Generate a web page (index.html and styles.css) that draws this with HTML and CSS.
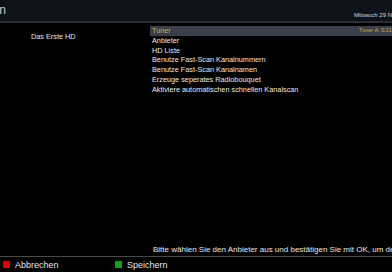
FILE: index.html
```html
<!DOCTYPE html>
<html lang="de">
<head>
  <meta charset="UTF-8">
  <title>Fast Scan</title>
  <link rel="stylesheet" href="styles.css">
</head>
<body>
  <div class="header">
    <span class="title">Fast Scan</span>
    <span class="date">Mittwoch 29 November</span>
  </div>
  <div class="main">
    <div class="left">
      <div class="channel">Das Erste HD</div>
    </div>
    <div class="list">
      <div class="row selected"><span>Tuner</span><span class="value">Tuner A: 5/21</span></div>
      <div class="row">Anbieter</div>
      <div class="row">HD Liste</div>
      <div class="row">Benutze Fast-Scan Kanalnummern</div>
      <div class="row">Benutze Fast-Scan Kanalnamen</div>
      <div class="row">Erzeuge seperates Radiobouquet</div>
      <div class="row">Aktiviere automatischen schnellen Kanalscan</div>
    </div>
  </div>
  <div class="help">Bitte wählen Sie den Anbieter aus und bestätigen Sie mit OK, um den Suchlauf zu starten.</div>
  <div class="footer">
    <div class="key"><span class="dot red"></span>Abbrechen</div>
    <div class="key"><span class="dot green"></span>Speichern</div>
  </div>
</body>
</html>
```

FILE: styles.css
```css
body {
  margin: 0;
  width: 392px;
  height: 272px;
  overflow: hidden;
  background: #000;
  color: #e8e8e8;
  font-family: 'Liberation Sans', Arial, sans-serif;
  font-size: 8px;
  display: flex;
  flex-direction: column;
}

.header {
  height: 21px;
  flex-shrink: 0;
  background: #0e121b;
  border-bottom: 2px solid #2a2d33;
  position: relative;
  white-space: nowrap;
  overflow: hidden;
}

.title {
  position: absolute;
  right: 386px;
  top: 3px;
  font-size: 12px;
  color: #c8c8c8;
}

.date {
  position: absolute;
  left: 354px;
  top: 12px;
  font-size: 6px;
  color: #d8d8d8;
}

.main {
  flex: 1;
  display: flex;
  padding-top: 3px;
}

.left {
  width: 150px;
}

.channel {
  padding: 6px 0 0 31px;
  font-size: 7.3px;
}

.list {
  flex: 1;
  white-space: nowrap;
  overflow: hidden;
  font-size: 7.3px;
}

.row {
  height: 9.8px;
  line-height: 9.8px;
  padding-left: 2px;
}

.row.selected {
  background: #3b3f4c;
  color: #c9a648;
  display: flex;
}

.row .value {
  font-size: 5.5px;
  margin-left: auto;
  width: 33px;
  overflow: hidden;
}

.help {
  white-space: nowrap;
  overflow: hidden;
  padding-left: 153px;
  height: 12px;
  line-height: 12px;
  font-size: 8px;
  border-bottom: 1px solid #4a4a4a;
}

.footer {
  height: 15px;
  flex-shrink: 0;
  display: flex;
  align-items: center;
  font-size: 9px;
}

.key {
  display: flex;
  align-items: center;
  width: 109px;
  padding-left: 3px;
}

.dot {
  width: 7px;
  height: 7px;
  margin-right: 5px;
}

.red { background: #e00000; }
.green { background: #1c9c1c; }
```
